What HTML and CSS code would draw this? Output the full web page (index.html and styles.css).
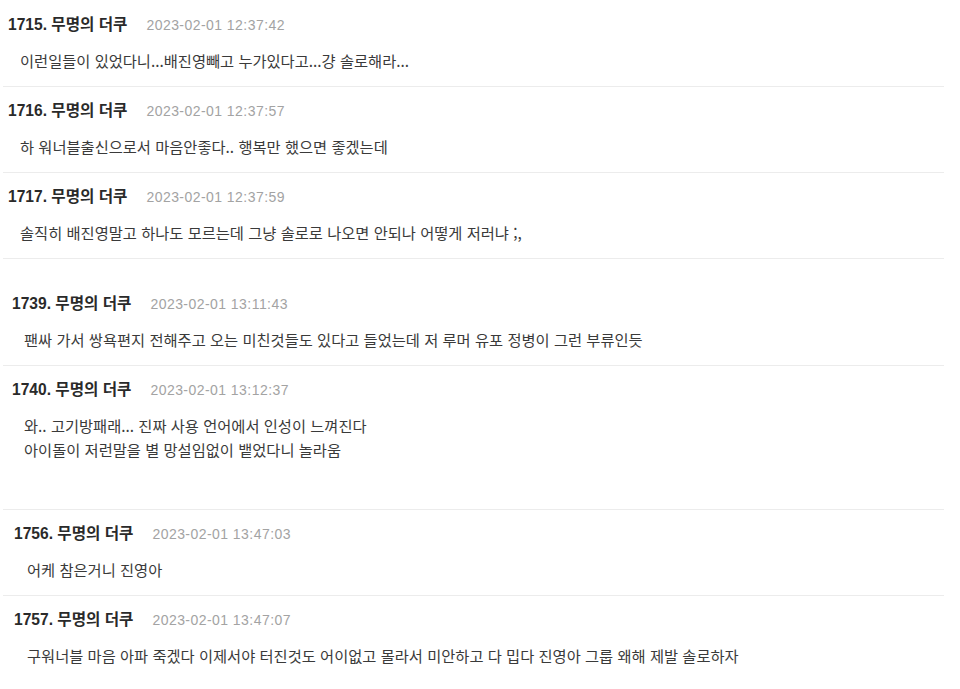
FILE: index.html
```html
<!DOCTYPE html>
<html lang="ko">
<head>
<meta charset="utf-8">
<title>댓글</title>
<link rel="stylesheet" href="styles.css">
</head>
<body>
<section class="thread thread-a">
  <article class="comment">
    <div class="meta"><span class="name">1715. 무명의 더쿠</span><span class="date">2023-02-01 12:37:42</span></div>
    <p class="text">이런일들이 있었다니...배진영빼고 누가있다고...걍 솔로해라...</p>
  </article>
  <article class="comment">
    <div class="meta"><span class="name">1716. 무명의 더쿠</span><span class="date">2023-02-01 12:37:57</span></div>
    <p class="text">하 워너블출신으로서 마음안좋다.. 행복만 했으면 좋겠는데</p>
  </article>
  <article class="comment">
    <div class="meta"><span class="name">1717. 무명의 더쿠</span><span class="date">2023-02-01 12:37:59</span></div>
    <p class="text">솔직히 배진영말고 하나도 모르는데 그냥 솔로로 나오면 안되나 어떻게 저러냐 ;,</p>
  </article>
</section>
<section class="thread thread-b">
  <article class="comment">
    <div class="meta"><span class="name">1739. 무명의 더쿠</span><span class="date">2023-02-01 13:11:43</span></div>
    <p class="text">팬싸 가서 쌍욕편지 전해주고 오는 미친것들도 있다고 들었는데 저 루머 유포 정병이 그런 부류인듯</p>
  </article>
  <article class="comment comment-tall">
    <div class="meta"><span class="name">1740. 무명의 더쿠</span><span class="date">2023-02-01 13:12:37</span></div>
    <p class="text">와.. 고기방패래... 진짜 사용 언어에서 인성이 느껴진다<br>아이돌이 저런말을 별 망설임없이 뱉었다니 놀라움</p>
  </article>
</section>
<section class="thread thread-c">
  <article class="comment">
    <div class="meta"><span class="name">1756. 무명의 더쿠</span><span class="date">2023-02-01 13:47:03</span></div>
    <p class="text">어케 참은거니 진영아</p>
  </article>
  <article class="comment comment-last">
    <div class="meta"><span class="name">1757. 무명의 더쿠</span><span class="date">2023-02-01 13:47:07</span></div>
    <p class="text">구워너블 마음 아파 죽겠다 이제서야 터진것도 어이없고 몰라서 미안하고 다 밉다 진영아 그룹 왜해 제발 솔로하자</p>
  </article>
</section>
</body>
</html>
```

FILE: styles.css
```css
html, body {
  margin: 0;
  padding: 0;
  background: #ffffff;
}

body {
  font-family: "Liberation Sans", "Noto Sans CJK KR", sans-serif;
  color: #333333;
  padding-top: 1px;
  width: 960px;
  height: 689px;
  overflow: hidden;
}

.thread {
  margin-left: 3px;
  width: 941px;
}

.comment {
  padding: 14px 0 14px 0;
  border-bottom: 1px solid #ececec;
}

.meta {
  display: flex;
  align-items: baseline;
  height: 20px;
  line-height: 20px;
}

.name {
  font-size: 15.6px;
  font-weight: bold;
  color: #2a2a2a;
}

.date {
  font-size: 14px;
  color: #a3a3a3;
  margin-left: 19px;
  letter-spacing: 0.45px;
}

.text {
  margin: 13px 0 0 0;
  font-family: "Noto Sans CJK KR", "Liberation Sans", sans-serif;
  font-size: 15.3px;
  line-height: 24px;
  color: #3a3a3a;
}

.thread-a .meta { padding-left: 5px; }
.thread-a .text { padding-left: 17px; }

.thread-b { margin-top: 21px; }
.thread-b .meta { padding-left: 9px; }
.thread-b .text { padding-left: 21px; }

.comment-tall { padding-bottom: 48px; }

.thread-c .meta { padding-left: 11px; }
.thread-c .text { padding-left: 24px; }

.comment-last { border-bottom: none; }
```
